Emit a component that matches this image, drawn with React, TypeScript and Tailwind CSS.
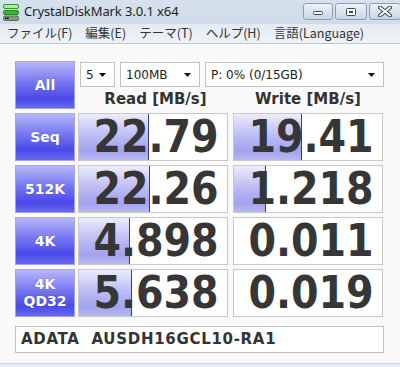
const ROWS = [
  { label: ["Seq"], read: "22.79", write: "19.41", rBar: 70, wBar: 68 },
  { label: ["512K"], read: "22.26", write: "1.218", rBar: 71, wBar: 32 },
  { label: ["4K"], read: "4.898", write: "0.011", rBar: 51, wBar: 0 },
  { label: ["4K", "QD32"], read: "5.638", write: "0.019", rBar: 53, wBar: 0 },
];

const MENU = ["ファイル(F)", "編集(E)", "テーマ(T)", "ヘルプ(H)", "言語(Language)"];

function BlueButton({ lines }: { lines: string[] }) {
  return (
    <div className="w-[60px] h-[48px] shrink-0 flex flex-col items-center justify-center border border-[#a4a4ea] bg-[linear-gradient(to_bottom,#b8b8f8_0%,#7c7cf2_40%,#4a4aea_78%,#6666ee_100%)] text-white font-bold text-[14px] leading-[17px] font-['DejaVu_Sans',sans-serif] [text-shadow:0_0_1px_rgba(60,60,160,0.5)]">
      {lines.map((l) => (
        <span key={l}>{l}</span>
      ))}
    </div>
  );
}

function ValueCell({ value, bar }: { value: string; bar: number }) {
  return (
    <div className="relative w-[150px] h-[48px] shrink-0 border border-[#c8c8c8] bg-white flex items-center justify-center">
      {bar > 0 && (
        <div
          className="absolute left-0 top-0 bottom-0 border-r border-[#3c3c7c] bg-[linear-gradient(to_bottom,#ececfd_0%,#bebef5_45%,#a2a2f0_80%,#b8b8f3_100%)]"
          style={{ width: bar }}
        />
      )}
      <span className="relative pl-[6px] text-[44px] leading-none font-bold text-[#363636] font-['DejaVu_Sans_Condensed','DejaVu_Sans',sans-serif] font-stretch-condensed">
        {value}
      </span>
    </div>
  );
}

function Select({ text, width }: { text: string; width: string }) {
  return (
    <div className={`${width} h-[25px] flex items-center justify-between border border-[#c2c2c2] bg-white pl-[5px] pr-[8px] text-[12px] text-[#222] font-['DejaVu_Sans',sans-serif]`}>
      <span>{text}</span>
      <svg width="7" height="4" viewBox="0 0 7 4">
        <path d="M0 0H7L3.5 4Z" fill="#111" />
      </svg>
    </div>
  );
}

function WinButton({ kind, width }: { kind: "min" | "max" | "close"; width: string }) {
  return (
    <div className={`${width} h-[17px] rounded-[3px] border border-[#8d9db2] bg-[linear-gradient(to_bottom,#eef2f7_0%,#dbe3ec_50%,#cad5e2_100%)] flex items-center justify-center`}>
      {kind === "min" && (
        <svg width="12" height="8" viewBox="0 0 12 8">
          <rect x="1.5" y="3.5" width="9" height="3" rx="1" fill="#fff" stroke="#39475a" />
        </svg>
      )}
      {kind === "max" && (
        <svg width="12" height="10" viewBox="0 0 12 10">
          <rect x="1.5" y="1.5" width="9" height="7" rx="1" fill="#fff" stroke="#39475a" />
          <rect x="4" y="4" width="4" height="2" fill="#39475a" />
        </svg>
      )}
      {kind === "close" && (
        <svg width="14" height="11" viewBox="0 0 14 11">
          <path d="M2 1.5L12 9.5M12 1.5L2 9.5" stroke="#39475a" strokeWidth="4" strokeLinecap="round" />
          <path d="M2 1.5L12 9.5M12 1.5L2 9.5" stroke="#fff" strokeWidth="2" strokeLinecap="round" />
        </svg>
      )}
    </div>
  );
}

export default function App() {
  return (
    <div className="w-[400px] h-[367px] flex flex-col overflow-hidden bg-[#fafafa]">
      {/* Title bar */}
      <div className="h-[24px] shrink-0 flex items-center bg-[linear-gradient(to_bottom,#d6e1ed,#cfdbe9)] pl-[3px]">
        <svg width="16" height="17" viewBox="0 0 16 17" className="shrink-0">
          <rect x="0.5" y="0.5" width="15" height="4" rx="1.5" fill="#b8e6a0" stroke="#2e9a2e" />
          <rect x="0.5" y="6.5" width="15" height="4" rx="1.5" fill="#3fae3f" stroke="#2a8a2a" />
          <rect x="0.5" y="12" width="15" height="4.5" rx="1.5" fill="#8a9a8a" stroke="#5a6a5a" />
          <rect x="2" y="13.5" width="4" height="1.5" fill="#1f1f1f" />
        </svg>
        <span className="ml-[5px] text-[13px] tracking-[-0.1px] text-[#1e1e1e] font-['Noto_Sans',sans-serif]">CrystalDiskMark 3.0.1 x64</span>
        <div className="ml-auto flex items-center gap-[2px] mr-[-1px] self-start mt-[3px]">
          <WinButton kind="min" width="w-[30px]" />
          <WinButton kind="max" width="w-[32px]" />
          <WinButton kind="close" width="w-[32px]" />
        </div>
      </div>

      {/* Menu bar */}
      <div className="h-[20px] shrink-0 flex items-center gap-[13px] pl-[7px] border-b border-[#b9c9dc] bg-[linear-gradient(to_bottom,#e3eaf3,#eef3f8)] text-[12.5px] text-[#333] font-['Noto_Sans_CJK_JP',sans-serif]">
        {MENU.map((m) => (
          <span key={m}>{m}</span>
        ))}
      </div>

      {/* Main */}
      <div className="flex-1 flex flex-col pl-[15px] pt-[17px]">
        <div className="flex gap-[3px]">
          <BlueButton lines={["All"]} />
          <div className="flex flex-col">
            <div className="flex gap-[5px] pl-[2px] pt-[1px]">
              <Select text="5" width="w-[35px]" />
              <Select text="100MB" width="w-[80px]" />
              <Select text="P: 0% (0/15GB)" width="w-[179px]" />
            </div>
            <div className="flex gap-[5px] mt-[2px] text-[15px] font-bold text-[#333] font-['DejaVu_Sans',sans-serif] leading-[20px]">
              <div className="w-[150px] text-center pl-[5px]">Read [MB/s]</div>
              <div className="w-[150px] text-center">Write [MB/s]</div>
            </div>
          </div>
        </div>

        <div className="flex flex-col gap-[4px] mt-[4px]">
          {ROWS.map((r) => (
            <div key={r.label.join()} className="flex">
              <BlueButton lines={r.label} />
              <div className="ml-[3px]">
                <ValueCell value={r.read} bar={r.rBar} />
              </div>
              <div className="ml-[5px]">
                <ValueCell value={r.write} bar={r.wBar} />
              </div>
            </div>
          ))}
        </div>

        <div className="mt-[9px] w-[369px] h-[27px] flex items-center border border-[#c2c2c2] bg-white pl-[5px] text-[15px] font-bold text-[#333] tracking-[0.7px] font-['DejaVu_Sans',sans-serif] whitespace-pre">
          ADATA  AUSDH16GCL10-RA1
        </div>
      </div>

      <div className="h-[4px] shrink-0 border-t border-[#c9d5e3] bg-[#e4ebf3]" />
    </div>
  );
}
